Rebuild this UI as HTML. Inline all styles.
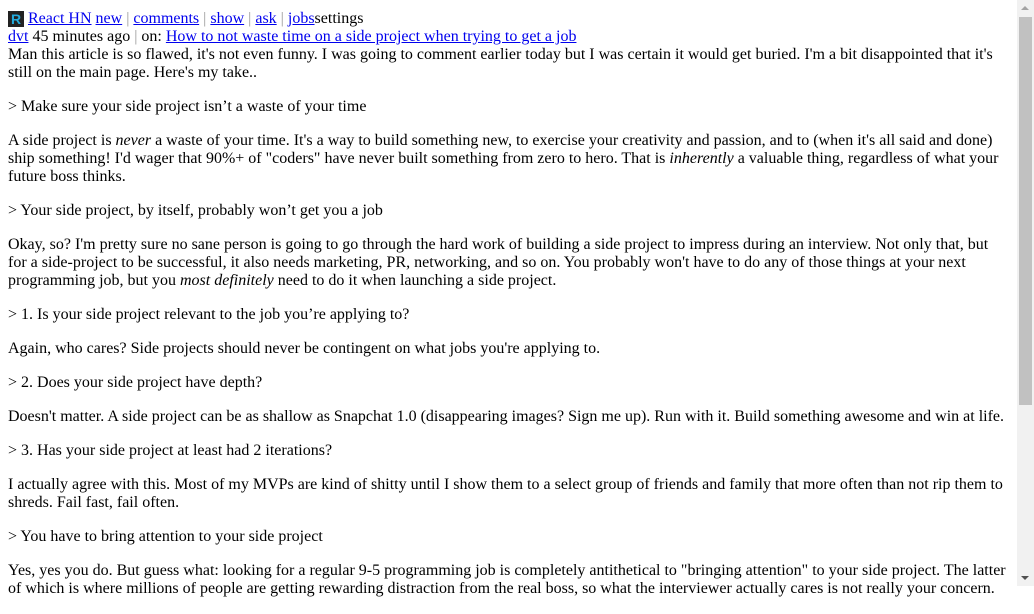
<!DOCTYPE html>
<html><head><meta charset="utf-8"><style>
html,body{margin:0;height:586px;overflow:hidden;background:#fff}
#c{position:absolute;left:8px;top:9px;width:1001px;font:16px/18px "Liberation Serif",serif;color:#000}
a{color:#0000ee}
p{margin:16px 0}
.logo{display:inline-block;width:16px;height:16px;background:#222;color:#2ad;font:bold 14px/16px "Liberation Sans",sans-serif;text-align:center;vertical-align:-1px}
.sep{color:#999}
#sb{position:absolute;right:0;top:0;width:17px;height:586px;background:#f1f1f1}
#th{position:absolute;left:2px;top:17px;width:13px;height:388px;background:#c1c1c1}
.ar{position:absolute;left:4px;width:0;height:0;border-left:4px solid transparent;border-right:4px solid transparent}
</style></head><body>
<div id="c">
<div style="height:18px;padding-top:1px"><span class="logo">R</span> <a href="#">React HN</a> <a href="#">new</a> <span class="sep">|</span> <a href="#">comments</a> <span class="sep">|</span> <a href="#">show</a> <span class="sep">|</span> <a href="#">ask</a> <span class="sep">|</span> <a href="#">jobs</a>settings</div>
<div><a href="#">dvt</a> 45 minutes ago <span class="sep">|</span> on: <a href="#">How to not waste time on a side project when trying to get a job</a></div>
<div>Man this article is so flawed, it's not even funny. I was going to comment earlier today but I was certain it would get buried. I'm a bit disappointed that it's still on the main page. Here's my take..
<p>&gt; Make sure your side project isn’t a waste of your time</p>
<p>A side project is <i>never</i> a waste of your time. It's a way to build something new, to exercise your creativity and passion, and to (when it's all said and done) ship something! I'd wager that 90%+ of "coders" have never built something from zero to hero. That is <i>inherently</i> a valuable thing, regardless of what your future boss thinks.</p>
<p>&gt; Your side project, by itself, probably won’t get you a job</p>
<p>Okay, so? I'm pretty sure no sane person is going to go through the hard work of building a side project to impress during an interview. Not only that, but for a side-project to be successful, it also needs marketing, PR, networking, and so on. You probably won't have to do any of those things at your next programming job, but you <i>most definitely</i> need to do it when launching a side project.</p>
<p>&gt; 1. Is your side project relevant to the job you’re applying to?</p>
<p>Again, who cares? Side projects should never be contingent on what jobs you're applying to.</p>
<p>&gt; 2. Does your side project have depth?</p>
<p>Doesn't matter. A side project can be as shallow as Snapchat 1.0 (disappearing images? Sign me up). Run with it. Build something awesome and win at life.</p>
<p>&gt; 3. Has your side project at least had 2 iterations?</p>
<p>I actually agree with this. Most of my MVPs are kind of shitty until I show them to a select group of friends and family that more often than not rip them to shreds. Fail fast, fail often.</p>
<p>&gt; You have to bring attention to your side project</p>
<p>Yes, yes you do. But guess what: looking for a regular 9-5 programming job is completely antithetical to "bringing attention" to your side project. The latter of which is where millions of people are getting rewarding distraction from the real boss, so what the interviewer actually cares is not really your concern.</p>
</div></div>
<div id="sb"><div class="ar" style="top:6px;border-bottom:4px solid #a3a3a3"></div><div id="th"></div><div class="ar" style="top:576px;border-top:4px solid #505050"></div></div>
</body></html>
